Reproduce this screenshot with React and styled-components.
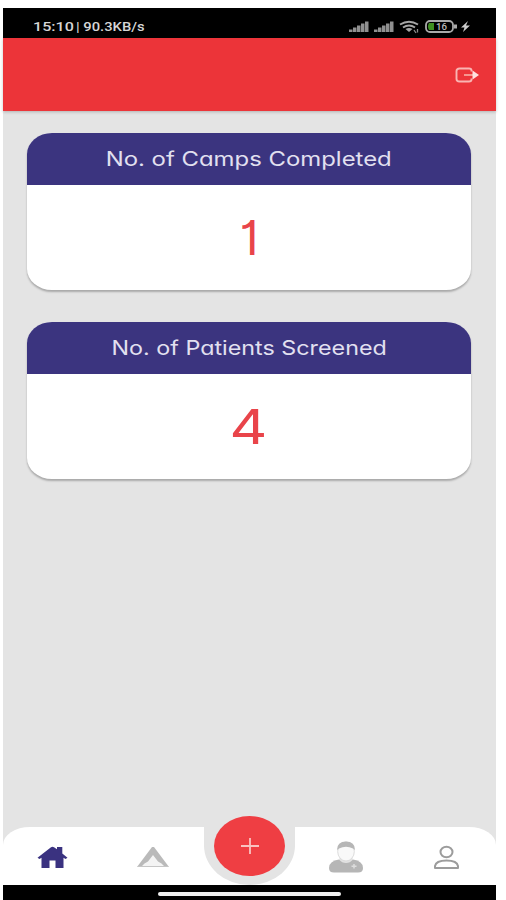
import React from 'react'
import styled, { createGlobalStyle } from 'styled-components'

const GlobalStyle = createGlobalStyle`
  body {
    background: #ffffff;
    margin: 0;
    overflow: hidden;
  }

  * {
    box-sizing: border-box;
  }
`

const Screen = styled.div`
  background-color: #e4e4e4;
  display: flex;
  flex-direction: column;
  font-family: Inter, 'Liberation Sans', sans-serif;
  font-feature-settings: 'cv01', 'cv11';
  height: 892px;
  margin: 8px 10px 0 3px;
`

const StatusBar = styled.div`
  align-items: center;
  background-color: #000000;
  color: #d6d6d6;
  display: flex;
  height: 30px;
  justify-content: space-between;
  padding: 7px 25px 0 30px;
`

const StatusText = styled.span`
  align-items: baseline;
  display: flex;
  font-family: Roboto, sans-serif;
  font-weight: 500;
  white-space: pre;
`

const Clock = styled.span`
  display: inline-block;
  font-size: 13px;
  line-height: 14px;
  transform: scaleX(1.24);
  transform-origin: left;
  width: 43px;
`

const NetSpeed = styled(Clock)`
  font-size: 12px;
  transform: scaleX(1.23);
  width: auto;
`

const Header = styled.header`
  align-items: center;
  background-color: #ec3439;
  box-shadow: 0 1px 3px rgba(0, 0, 0, 0.22);
  display: flex;
  height: 73px;
  justify-content: flex-end;
  padding-right: 17px;
`

const Content = styled.main`
  display: flex;
  flex: 1;
  flex-direction: column;
  gap: 32px;
  padding: 22px 25px 0 24px;
`

const Card = styled.section`
  background-color: #ffffff;
  border-radius: 25px / 21px;
  box-shadow: 0 2px 2px rgba(0, 0, 0, 0.26);
  height: 157px;
  overflow: hidden;
`

const CardTitle = styled.h2`
  align-items: center;
  background-color: #3b347f;
  color: #e2e0f0;
  display: flex;
  font-size: 20px;
  font-weight: 400;
  height: 52px;
  justify-content: center;
  margin: 0;
  padding-bottom: 1px;
`

const TitleText = styled.span`
  transform: scaleX(${props => props.$stretch});
  white-space: nowrap;
`

const CardValue = styled.div`
  align-items: center;
  color: #e9444a;
  display: flex;
  font-size: 48px;
  height: 105px;
  justify-content: center;
  line-height: 1;
`

const ValueText = styled.span`
  transform: scaleX(${props => props.$stretch});
`

const NavBar = styled.nav`
  background-color: #ffffff;
  border-radius: 27px 27px 0 0 / 18px 18px 0 0;
  display: grid;
  grid-template-columns: 99px 102px 91px 101px 100px;
  height: 58px;
`

const NavItem = styled.button`
  align-items: center;
  background: none;
  border: 0;
  display: flex;
  justify-content: center;
  padding: 2px 0 0;
`

const Notch = styled.div`
  background-color: #e4e4e4;
  border-radius: 0 0 46px 46px / 0 0 40px 40px;
  display: flex;
  height: 58px;
  justify-content: center;
`

const AddButton = styled.button`
  align-items: center;
  background-color: #ef3e43;
  border: 0;
  border-radius: 50%;
  display: flex;
  flex-shrink: 0;
  height: 60px;
  justify-content: center;
  margin-top: -11px;
  padding: 0;
  width: 71px;
`

const GestureBar = styled.div`
  background-color: #000000;
  display: flex;
  height: 15px;
  justify-content: center;
  padding-top: 7px;
`

const GestureHandle = styled.div`
  background-color: #f0f0f0;
  border-radius: 2px;
  height: 4px;
  width: 183px;
`

const StatusIcons = () => (
  <svg width='122' height='14' viewBox='0 0 122 14' fill='none'>
    {[0, 25].map(x => (
      <g key={x} fill='#909090'>
        <rect x={x} y='9.5' width='3.5' height='2.5' />
        <rect x={x + 4} y='7.5' width='3.5' height='4.5' />
        <rect x={x + 8} y='5.500' width='3.500' height='6.500' />
        <rect x={x + 12} y='3.500' width='3.500' height='8.500' />
        <rect x={x + 16} y='1.500' width='3.500' height='10.500' />
      </g>
    ))}
    <g stroke='#a6a6a6' strokeWidth='2'>
      <path d='M51 4.500 Q60 -1 69 4.500' />
      <path d='M54 7.500 Q60 3.500 66 7.500' />
    </g>
    <path d='M56.500 9 Q60 7 63.500 9 L60 12Z' fill='#a6a6a6' />
    <path d='M65 10 L67 13 M68.500 12.500 V9' stroke='#8c8c8c' strokeWidth='1.300' />
    <rect x='77' y='1' width='27' height='11' rx='4' stroke='#a9a9a9' strokeWidth='1.800' />
    <path d='M80 3 h5 v7 h-5 q-2 -3.500 0 -7Z' fill='#3f8f20' />
    <text x='87' y='10' fill='#bdbdbd' fontFamily='Roboto' fontSize='9' fontWeight='500' textLength='11' lengthAdjust='spacingAndGlyphs'>16</text>
    <rect x='105' y='4.500' width='3' height='4' fill='#a9a9a9' />
    <path d='M119 1 L112 7.500 h3.500 L114 12 L121 5.500 h-4Z' fill='#cccccc' />
  </svg>
)

const LogoutIcon = () => (
  <svg width='25' height='18' viewBox='0 0 25 18' fill='none'>
    <path
      d='M17.500 5.500 V4.500 Q17.500 2.500 15 2.500 H5.500 Q2.500 2.500 2.500 5 V13 Q2.500 15.500 5.500 15.500 H15 Q17.500 15.500 17.500 13.500 V12.500'
      stroke='#f9b5b3'
      strokeWidth='1.900'
    />
    <path d='M10 9 H20' stroke='#f8a79f' strokeWidth='1.700' />
    <path d='M18.500 4.500 L25 9 L18.500 13.500Z' fill='#ffe1df' />
  </svg>
)

const HomeIcon = () => (
  <svg width='31' height='23' viewBox='0 0 31 23' fill='#3a3280'>
    <path d='M0.500 11.800 L14 1.200 Q15.500 0.200 17 1.200 L20 3.200 V1 H25.300 V7.500 L30.500 11.800 L28.500 13 L26.500 11.800 V22 H18.500 V14.500 H12.500 V22 H4.500 V11.800 L2.500 13Z' />
  </svg>
)

const TentIcon = () => (
  <svg width='34' height='22' viewBox='0 0 34 22'>
    <path d='M16 1 H18 L33 21 H1Z' fill='#bababa' />
    <path d='M17 9 L22 15.500 Q26 17 28 20 H6 Q8 17 12 15.500Z' fill='#f4f4f4' />
    <path d='M2 20.500 H32' stroke='#c6c6c6' />
  </svg>
)

const DoctorIcon = () => (
  <svg width='36' height='33' viewBox='0 0 36 33'>
    <path d='M1 27 Q1 20 11 18.500 H25 Q35 20 35 27 Q35 31.500 30 31.500 H6 Q1 31.500 1 27Z' fill='#b6b6b6' />
    <path d='M12 16 L11 18.500 Q14 22 18 22 Q22 22 25 18.500 L24 16Z' fill='#e2e2e2' />
    <ellipse cx='18' cy='10.500' rx='8.300' ry='9.500' fill='#f9f9f9' stroke='#dcdcdc' />
    <path d='M9 9 Q9 0.500 18 0.500 Q27 0.500 27 9 L25 7.500 Q18 4 11 7.500Z' fill='#b6b6b6' />
    <path d='M26 23 V27.500 M23.500 25.200 H28.500' stroke='#dddddd' strokeWidth='1.500' />
  </svg>
)

const ProfileIcon = () => (
  <svg width='27' height='25' viewBox='0 0 27 25' fill='none' stroke='#9c9c9c' strokeWidth='2'>
    <ellipse cx='13.500' cy='7' rx='6' ry='5.300' />
    <path d='M2 23 V21 Q3 15.500 13.500 15.500 Q24 15.500 25 21 V23Z' strokeLinejoin='round' />
  </svg>
)

const PlusIcon = () => (
  <svg width='20' height='18' viewBox='0 0 20 18' stroke='#f9c3c1' strokeWidth='1.800'>
    <path d='M10 1 V17 M1 9 H19' />
  </svg>
)

const stats = [
  { title: 'No. of Camps Completed', value: 1, titleStretch: 1.195, valueStretch: 1 },
  { title: 'No. of Patients Screened', value: 4, titleStretch: 1.165, valueStretch: 1.22 }
]

const StatCard = ({ title, value, titleStretch, valueStretch }) => (
  <Card>
    <CardTitle>
      <TitleText $stretch={titleStretch}>{title}</TitleText>
    </CardTitle>
    <CardValue>
      <ValueText $stretch={valueStretch}>{value}</ValueText>
    </CardValue>
  </Card>
)

export default function App () {
  return (
    <Screen>
      <GlobalStyle />
      <StatusBar>
        <StatusText>
          <Clock>15:10</Clock>
          <NetSpeed>| 90.3KB/s</NetSpeed>
        </StatusText>
        <StatusIcons />
      </StatusBar>
      <Header>
        <LogoutIcon />
      </Header>
      <Content>
        {stats.map(stat => <StatCard key={stat.title} {...stat} />)}
      </Content>
      <NavBar>
        <NavItem aria-label='Home'><HomeIcon /></NavItem>
        <NavItem aria-label='Camps'><TentIcon /></NavItem>
        <Notch>
          <AddButton aria-label='Add'><PlusIcon /></AddButton>
        </Notch>
        <NavItem aria-label='Patients'><DoctorIcon /></NavItem>
        <NavItem aria-label='Profile'><ProfileIcon /></NavItem>
      </NavBar>
      <GestureBar>
        <GestureHandle />
      </GestureBar>
    </Screen>
  )
}
